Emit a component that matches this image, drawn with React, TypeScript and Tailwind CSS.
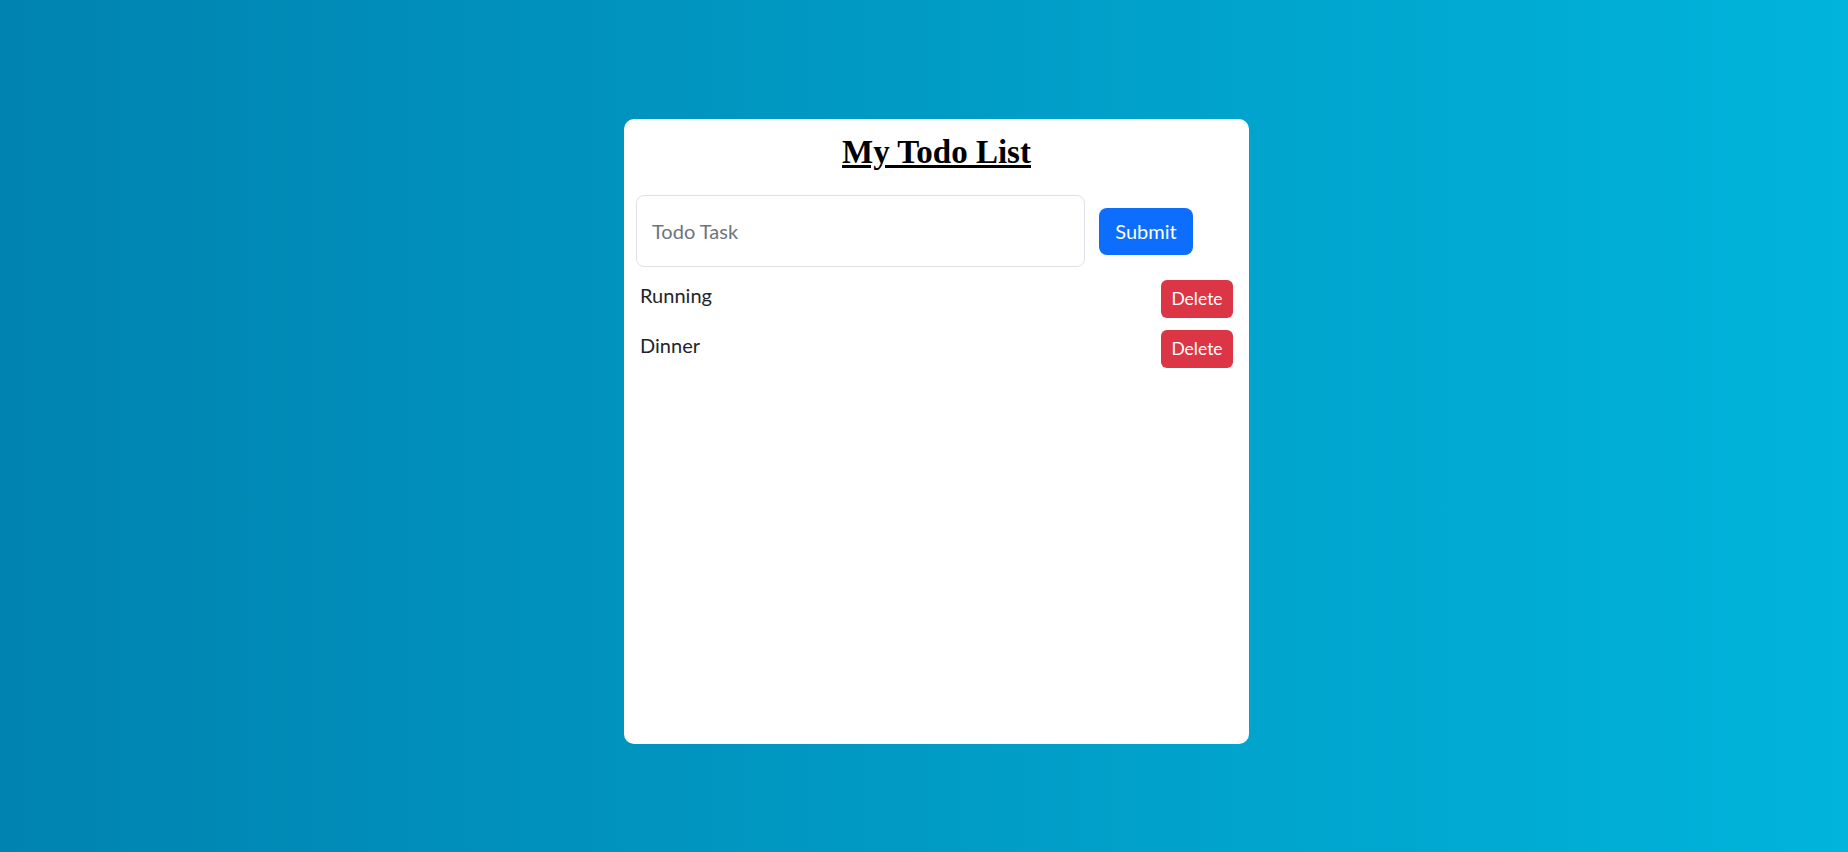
import React, { useState } from "react";

export default function App() {
  const [todos] = useState(["Running", "Dinner"]);
  return (
    <div className="w-full h-[852px] flex items-start justify-center pt-[119px] pl-[25px] bg-linear-to-r from-[#0083b0] to-[#00b4db]">
      <div className="w-[625px] h-[625px] bg-white rounded-[10px] flex flex-col" style={{ fontFamily: '"Segoe UI", Lato, sans-serif' }}>
        <h1
          className="mt-[13px] mb-[2px] text-center text-[33px] leading-[40px] font-bold underline text-black"
          style={{ fontFamily: '"Liberation Serif", "Times New Roman", serif' }}
        >
          My Todo List
        </h1>
        <form className="flex items-center mt-[21px] ml-[12px]" onSubmit={(e) => e.preventDefault()}>
          <input
            type="text"
            placeholder="Todo Task"
            className="w-[449px] h-[72px] border border-[#dee2e6] rounded-[8px] px-[15px] text-[20px] text-[#212529] placeholder:text-[#6c757d] outline-none"
          />
          <button
            type="submit"
            className="ml-[14px] w-[94px] h-[47px] rounded-[8px] bg-[#0d6efd] text-white text-[20px]"
          >
            Submit
          </button>
        </form>
        <div className="flex flex-col gap-[12px] mt-[13px] ml-[16px] mr-[16px]">
          {todos.map((t) => (
            <div key={t} className="flex items-start justify-between h-[38px]">
              <span className="text-[20px] leading-[30px] text-[#212529]">{t}</span>
              <button className="w-[72px] h-[38px] rounded-[6px] bg-[#dc3545] text-white text-[17.5px]">
                Delete
              </button>
            </div>
          ))}
        </div>
      </div>
    </div>
  );
}
